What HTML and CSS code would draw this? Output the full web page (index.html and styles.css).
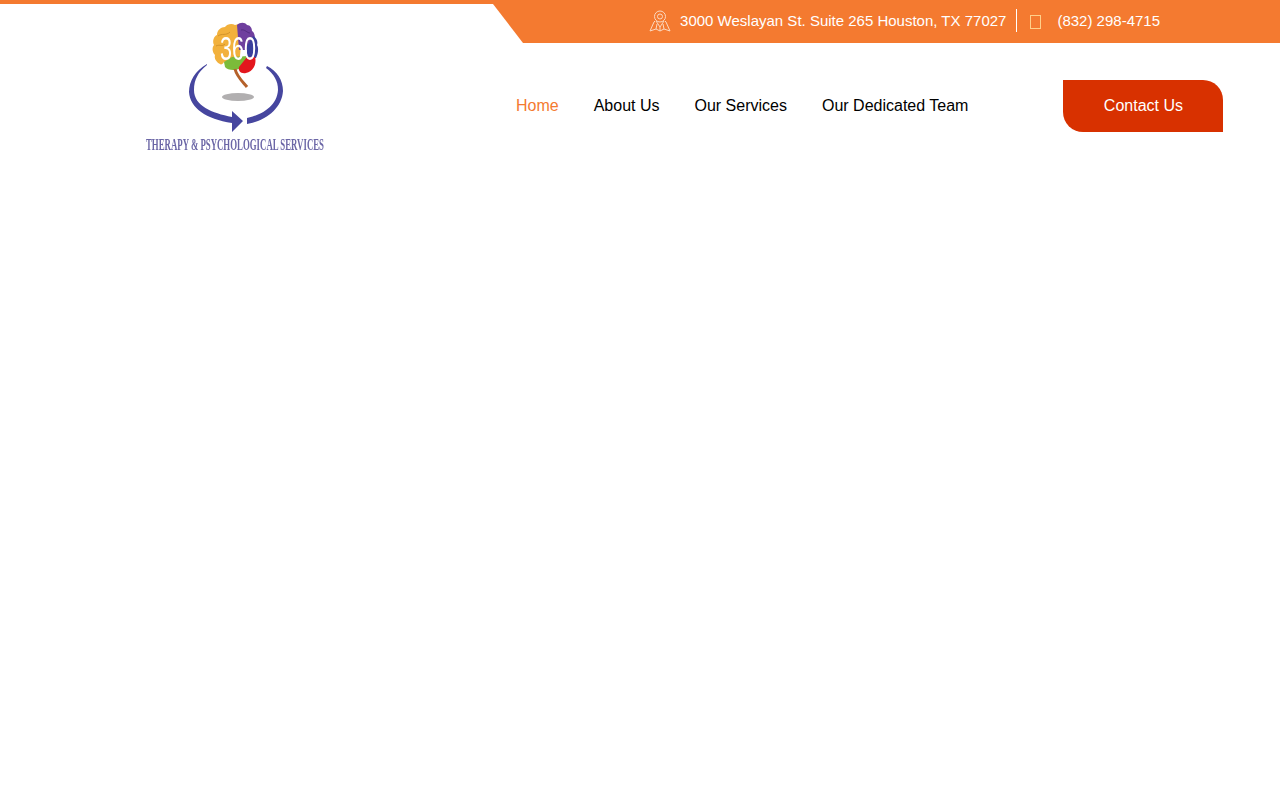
FILE: index.html
```html
<!DOCTYPE html>
<html lang="en">
<head>
  <meta charset="UTF-8">
  <meta name="viewport" content="width=device-width, initial-scale=1.0">
  <title>360 Therapy &amp; Psychological Services</title>
  <link rel="stylesheet" href="styles.css">
</head>
<body>
  <header class="site-header">
    <div class="brand">
      <a href="#" class="logo">
        <svg width="182" height="134" viewBox="144 19 182 134">
          <!-- brain -->
          <path fill="#f2b13c" d="M220 64C216 62 214 58 215 55C212 52 212 47 214 45C212 41 214 36 217 35C217 30 221 27 225 27C227 24 232 23 235 25L239 24L241 42L240 57L232 58L228 62L224 62C223 64 221 65 220 64Z"/>
          <path fill="#6f3f9e" d="M237 25C240 22 245 22 247 25C250 25 252 28 252 31C255 33 255 37 255 40L249 50L239 50Z"/>
          <path fill="#3a3f9c" d="M253 36C257 38 258 42 257 45C259 48 258 54 256 58L247 59L247 46Z"/>
          <path fill="#7cbb3a" d="M224 62L232 57L248 56L247 63L239 69C234 71 227 70 225 67Z"/>
          <path fill="#e3161d" d="M239 67L247 57L255 57C257 64 253 72 246 73C241 74 238 71 239 67Z"/>
          <path fill="none" stroke="#b5612a" stroke-width="3" d="M235 69C237 77 243 82 247 87"/>
          <path fill="none" stroke="#c98a24" stroke-width="0.8" d="M218 36C222 33 226 36 230 32M216 46C220 44 222 47 225 44"/>
          <path fill="none" stroke="#4c2a78" stroke-width="0.8" d="M241 30C245 29 247 33 250 33"/>
          <text class="logo-num" x="220" y="60" textLength="36" lengthAdjust="spacingAndGlyphs">360</text>
          <ellipse cx="238" cy="97" rx="16" ry="4" fill="#b1afb0"/>
          <!-- arrow ring -->
          <path fill="#46469f" d="M207 64C195 71 189 81 189 92C190 108 206 119 232 123L232 132L243 121L232 111L232 117C212 113 194 106 194 90C194 80 198 72 207 65Z"/>
          <path fill="#46469f" d="M267 66C277 71 283 80 283 91C282 108 266 121 247 124L247 118C262 115 277 106 278 90C278 81 274 74 266 68Z"/>
          <text class="logo-name" x="146" y="150" textLength="178" lengthAdjust="spacingAndGlyphs">THERAPY &amp; PSYCHOLOGICAL SERVICES</text>
        </svg>
      </a>
    </div>

    <div class="header-right">
      <div class="top-bar">
        <svg class="pin-icon" width="22" height="22" viewBox="0 0 22 22" fill="none" stroke="#fbd9c0" stroke-width="1">
          <circle cx="11" cy="6.5" r="5.5"/>
          <circle cx="11" cy="6.5" r="2.5"/>
          <path d="M7 11L11 17L15 11"/>
          <path d="M6 11L5 12L1 21L7 19L11 21L15 19L21 21L17 12L16 11"/>
          <path d="M7 19L8 14M15 19L14 14M11 21V17"/>
        </svg>
        <span class="top-text">3000 Weslayan St. Suite 265 Houston, TX 77027</span>
        <span class="divider"></span>
        <span class="phone-icon"></span>
        <span class="top-text">(832) 298-4715</span>
      </div>

      <div class="nav-row">
        <nav class="main-nav">
          <a href="#" class="active">Home</a>
          <a href="#">About Us</a>
          <a href="#">Our Services</a>
          <a href="#">Our Dedicated Team</a>
        </nav>
        <a href="#" class="contact-btn">Contact Us</a>
      </div>
    </div>
  </header>
</body>
</html>
```

FILE: styles.css
```css
body {
  font-family: "Liberation Sans", Arial, sans-serif;
  background-color: #fff;
  color: #000;
  margin: 0;
  padding: 0;
  font-size: 16px;
}
a {
  text-decoration: none;
  color: inherit;
}
.site-header {
  display: grid;
  grid-template-columns: 493px 1fr;
}
.brand {
  border-top: 4px solid #f47a30;
  padding: 15px 0 0 144px;
}
.logo {
  display: block;
  width: 182px;
  filter: blur(0.35px);
}
.logo svg {
  display: block;
  overflow: visible;
}
.logo-num {
  font-family: "Liberation Sans", Arial, sans-serif;
  font-size: 33px;
  fill: #fff;
}
.logo-name {
  font-family: "Liberation Serif", serif;
  font-size: 16px;
  font-weight: bold;
  fill: #6b66a6;
}
.top-bar {
  display: flex;
  align-items: center;
  justify-content: flex-end;
  height: 43px;
  padding-right: 120px;
  padding-bottom: 2px;
  box-sizing: border-box;
  background-color: #f47a30;
  color: #fff;
  font-size: 15px;
  clip-path: polygon(0 0, 100% 0, 100% 100%, 30px 100%, 0 4px);
}
.pin-icon {
  margin-right: 9px;
}
.divider {
  width: 1px;
  height: 23px;
  background-color: #fff;
  margin: 0 13px 0 10px;
}
.phone-icon {
  width: 9px;
  height: 12px;
  border: 1px solid #ffd08a;
  margin: 2px 16px 0 0;
}
.nav-row {
  display: flex;
  align-items: center;
  padding: 37px 0 0 23px;
}
.main-nav {
  display: flex;
  gap: 35px;
}
.main-nav .active {
  color: #f47a30;
}
.contact-btn {
  display: flex;
  align-items: center;
  justify-content: center;
  width: 160px;
  height: 52px;
  margin-left: 95px;
  background-color: #d83100;
  color: #fff;
  border-radius: 0 20px 0 20px;
}
```
